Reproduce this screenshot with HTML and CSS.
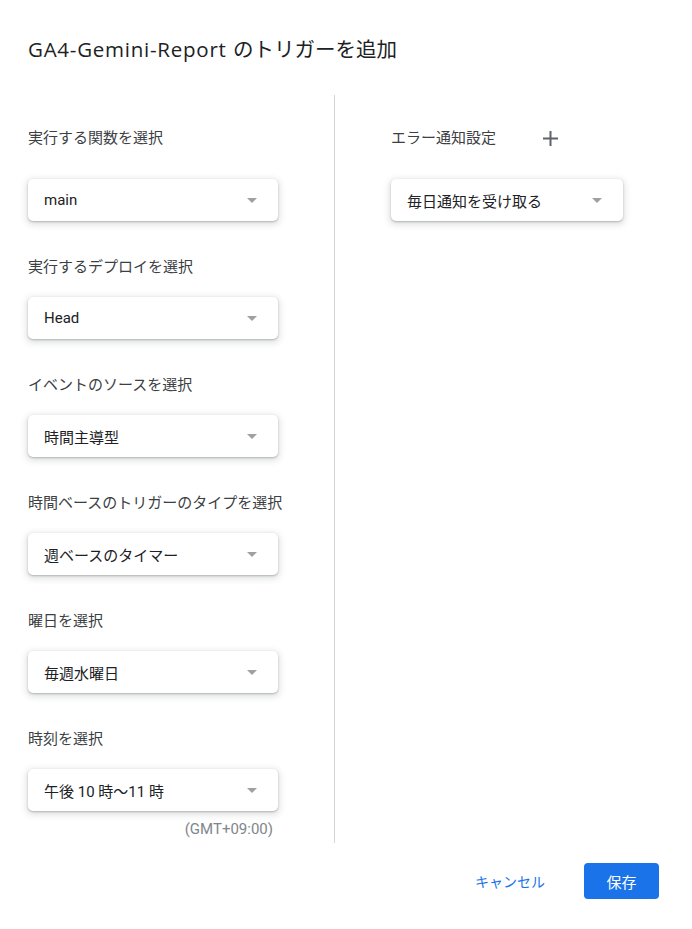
FILE: index.html
```
<!DOCTYPE html>
<html lang="ja">
<head>
<meta charset="utf-8">
<title>トリガーを追加</title>
<link rel="stylesheet" href="styles.css">
</head>
<body>
<div class="dialog">
  <h1 class="title"><span class="title-en">GA4-Gemini-Report</span> <span class="title-ja">のトリガーを追加</span></h1>
  <div class="columns">
    <div class="col col-left">
      <div class="field field-first">
        <div class="label">実行する関数を選択</div>
        <div class="select"><span class="value">main</span><span class="arrow"></span></div>
      </div>
      <div class="field">
        <div class="label">実行するデプロイを選択</div>
        <div class="select"><span class="value">Head</span><span class="arrow"></span></div>
      </div>
      <div class="field">
        <div class="label">イベントのソースを選択</div>
        <div class="select"><span class="value">時間主導型</span><span class="arrow"></span></div>
      </div>
      <div class="field">
        <div class="label">時間ベースのトリガーのタイプを選択</div>
        <div class="select"><span class="value">週ベースのタイマー</span><span class="arrow"></span></div>
      </div>
      <div class="field">
        <div class="label">曜日を選択</div>
        <div class="select"><span class="value">毎週水曜日</span><span class="arrow"></span></div>
      </div>
      <div class="field field-last">
        <div class="label">時刻を選択</div>
        <div class="select"><span class="value">午後 10 時～11 時</span><span class="arrow"></span></div>
      </div>
      <div class="tz">(GMT+09:00)</div>
    </div>
    <div class="col col-right">
      <div class="label-row">
        <span class="label">エラー通知設定</span>
        <span class="add" aria-label="追加">
          <svg width="15" height="15" viewBox="0 0 15 15"><path d="M7.5 0v15M0 7.5h15" stroke="#5f6368" stroke-width="2" fill="none"/></svg>
        </span>
      </div>
      <div class="select select-narrow"><span class="value">毎日通知を受け取る</span><span class="arrow"></span></div>
    </div>
  </div>
  <div class="footer">
    <button class="btn-text">キャンセル</button>
    <button class="btn-primary">保存</button>
  </div>
</div>
</body>
</html>
```
FILE: styles.css
```
* { box-sizing: border-box; }
html, body { margin: 0; padding: 0; background: #fff; }
body {
  font-family: Roboto, "Noto Sans CJK JP", sans-serif;
  color: #202124;
}
.dialog {
  width: 692px;
  padding: 33px 33px 0 28px;
}
.title {
  margin: 0 0 30px;
  height: 32px;
  font-family: "Open Sans", "Noto Sans CJK JP", sans-serif;
  font-size: 20.5px;
  line-height: 32px;
  font-weight: 400;
  color: #202124;
  white-space: nowrap;
}
.title-en {
  letter-spacing: 0.75px;
}
.title-ja {
  font-family: "Noto Sans CJK JP", sans-serif;
  font-size: 20.5px;
  line-height: 20px;
  margin-left: 1px;
}
.columns {
  display: flex;
}
.col-left {
  width: 306px;
  padding: 33px 0 5px;
  display: flex;
  flex-direction: column;
}
.field {
  display: flex;
  flex-direction: column;
  gap: 20px;
  margin-bottom: 36px;
}
.field-last { margin-bottom: 0; }
.field-first { gap: 31px; }
.label {
  font-size: 15px;
  line-height: 20px;
  color: #3c4043;
}
.select {
  width: 250px;
  height: 42px;
  border-radius: 5px;
  background: #fff;
  box-shadow: 0 1px 2px 0 rgba(60,64,67,.3), 0 2px 6px 2px rgba(60,64,67,.15);
  display: flex;
  align-items: center;
  justify-content: space-between;
  padding: 0 21px 0 16px;
  font-size: 15px;
  color: #202124;
}
.select-narrow { width: 232px; }
.arrow {
  width: 0;
  height: 0;
  border-left: 5px solid transparent;
  border-right: 5px solid transparent;
  border-top: 5px solid #a0a0a0;
}
.tz {
  width: 245px;
  margin-top: 9px;
  text-align: right;
  font-size: 15px;
  line-height: 18px;
  color: #80868b;
}
.col-right {
  flex: 1;
  border-left: 1px solid #d3d5d8;
  padding: 33px 0 0 56px;
}
.label-row {
  display: flex;
  align-items: center;
  height: 20px;
  margin-bottom: 31px;
}
.label-row .label { width: 145px; }
.add {
  width: 15px;
  height: 15px;
  margin-left: 7px;
  display: flex;
}
.footer {
  display: flex;
  justify-content: flex-end;
  align-items: center;
  margin-top: 20px;
}
.btn-text {
  border: 0;
  background: none;
  font-family: inherit;
  font-size: 14px;
  color: #1a73e8;
  height: 36px;
  padding: 0 8px;
  margin-right: 31px;
  cursor: pointer;
}
.btn-primary {
  border: 0;
  background: #1a73e8;
  color: #fff;
  font-family: inherit;
  font-size: 15px;
  width: 75px;
  height: 36px;
  border-radius: 4px;
  cursor: pointer;
}
```
